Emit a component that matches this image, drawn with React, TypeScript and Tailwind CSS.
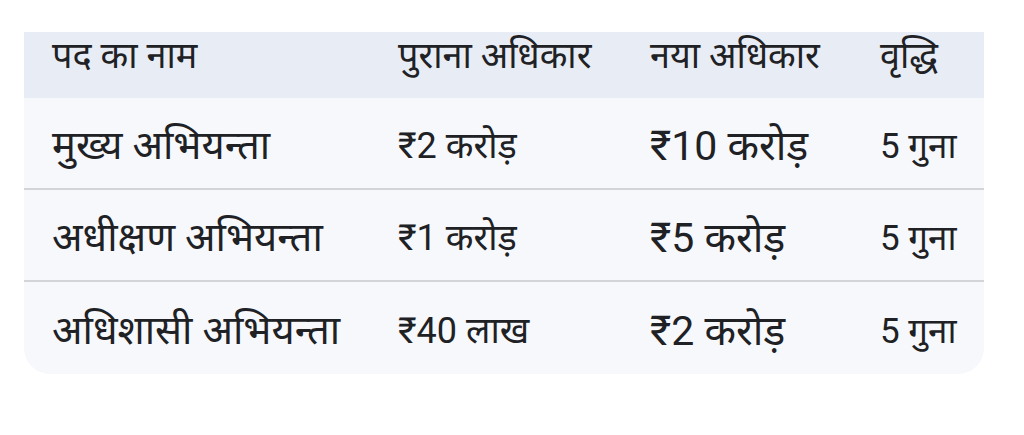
import React from 'react';

const rows = [
  { name: 'मुख्य अभियन्ता', old: '₹2 करोड़', next: '₹10 करोड़', growth: '5 गुना' },
  { name: 'अधीक्षण अभियन्ता', old: '₹1 करोड़', next: '₹5 करोड़', growth: '5 गुना' },
  { name: 'अधिशासी अभियन्ता', old: '₹40 लाख', next: '₹2 करोड़', growth: '5 गुना' },
];

const cols = 'grid grid-cols-[346px_252px_230px_1fr] pl-[28px]';

export default function App() {
  return (
    <div className="w-[1024px] h-[435px] bg-white pt-[32px] pl-[24px] font-['Roboto','Noto_Sans',sans-serif] text-[#202124]">
      <div className="w-[960px] rounded-b-[26px] overflow-hidden bg-[#f7f8fc]">
        {/* header */}
        <div className={`${cols} h-[66px] bg-[#e8ecf4] items-center pb-[18px] text-[36px] leading-none`}>
          <div>पद का नाम</div>
          <div>पुराना अधिकार</div>
          <div>नया अधिकार</div>
          <div>वृद्धि</div>
        </div>

        {rows.map((row, i) => (
          <div
            key={row.name}
            className={`${cols} items-center h-[92px] pt-[6px] leading-none ${i < rows.length - 1 ? 'border-b-2 border-[#d2d4d8]' : ''}`}
          >
            <div className="text-[40px]">{row.name}</div>
            <div className="text-[36px]">{row.old}</div>
            <div className="text-[41px]">{row.next}</div>
            <div className="text-[35px]">{row.growth}</div>
          </div>
        ))}
      </div>
    </div>
  );
}
